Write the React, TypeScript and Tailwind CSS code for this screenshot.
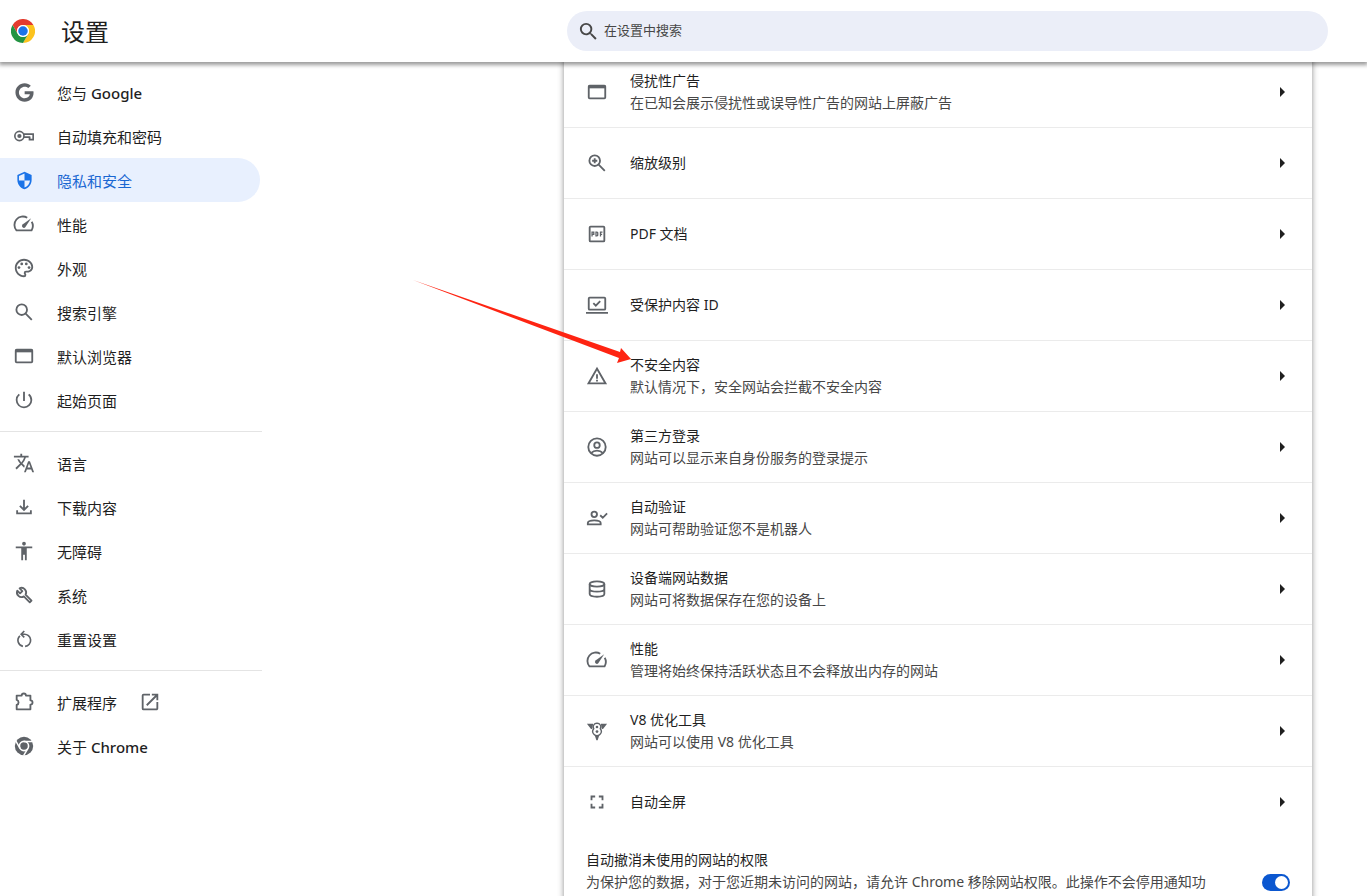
import type { ReactNode } from 'react';
import { FaGoogle } from 'react-icons/fa';
import {
  MdOutlinePalette, MdSearch, MdPowerSettingsNew, MdTranslate, MdAccessibility, MdOutlineFullscreen,
  MdOpenInNew, MdWarningAmber, MdSecurity,
} from 'react-icons/md';

function Glyph({ children, box = '0 0 24 24' }: { children: ReactNode; box?: string }) {
  return (
    <svg viewBox={box} className="size-[22px]" fill="none" stroke="currentColor" strokeWidth="2" aria-hidden="true">
      {children}
    </svg>
  );
}

const Key = () => (
  <Glyph>
    <circle cx="7" cy="12" r="5" strokeWidth="1.800" />
    <circle cx="7" cy="12" r="2.300" fill="currentColor" stroke="none" />
    <path d="M11.500 10H22v6h-4v-2.800h-6.200M18.200 13.200v2.800" strokeWidth="1.800" />
  </Glyph>
);

const Speed = () => (
  <Glyph>
    <path d="M15.500 5.100A9.200 9.200 0 0 0 3.800 19h16.400a9.200 9.200 0 0 0 .2-9.400" />
    <path d="M19.800 5.800 10.400 12.600a2.100 2.100 0 1 0 3 3z" fill="currentColor" stroke="none" />
  </Glyph>
);

const WindowIcon = () => (
  <Glyph>
    <rect x="3" y="5" width="18" height="14" rx="1" />
    <path d="M2.500 6.500h19" strokeWidth="3" />
  </Glyph>
);

const Loupe = () => (
  <Glyph>
    <circle cx="9.500" cy="9.500" r="5.800" />
    <path d="m13.800 13.800 6.700 6.700" />
  </Glyph>
);

const ZoomIn = () => (
  <Glyph>
    <circle cx="9.500" cy="9.500" r="5.800" />
    <path d="m13.800 13.800 6.700 6.700M9.500 6.700v5.600M6.700 9.500h5.600" />
  </Glyph>
);

const Download = () => (
  <Glyph>
    <path d="M12 4v11M7.500 10.800 12 15.200l4.500-4.400M4.500 15.500V19h15v-3.500" />
  </Glyph>
);

const Wrench = () => (
  <Glyph>
    <path d="M11.800 13.500 18.300 20l1.900-1.900-6.500-6.500A5 5 0 0 0 7.200 4.700l3 3-2.500 2.500-3-3a5 5 0 0 0 7.100 6.300z" strokeLinejoin="round" />
  </Glyph>
);

const Reset = () => (
  <Glyph>
    <path d="M10.800 20A6.600 6.600 0 0 1 7.600 8.600M13.200 20A6.600 6.600 0 0 0 12 6.800H9.500M12.300 3.300 8.900 6.800l3.400 3.400" strokeWidth="1.800" />
  </Glyph>
);

const Puzzle = () => (
  <Glyph>
    <path d="M4 5h5.500a2.200 2.200 0 0 1 4.600 0H19v5.200a2.200 2.200 0 0 1 0 4.600V20H4v-4.800a2.800 2.800 0 0 0 0-5.400z" strokeLinejoin="round" />
  </Glyph>
);

const ChromeMono = () => (
  <Glyph>
    <circle cx="12" cy="12" r="10" fill="currentColor" stroke="none" />
    <circle cx="12" cy="12" r="5" fill="currentColor" stroke="#fff" strokeWidth="1.800" />
    <path d="M12 7h9.500M7.700 14.500 3 6.400M16.300 14.500 11.600 22.600" stroke="#fff" strokeWidth="1.600" />
  </Glyph>
);

const Pdf = () => (
  <Glyph>
    <rect x="4" y="4" width="16" height="16" rx="1" />
    <path d="M6.600 14.800V9.900h1.900v2.400H6.600M10.900 9.900v4.200h1.100l.8-.8V10.700l-.8-.8zM15.800 14.800V9.900h2.200M15.800 12.400h1.800" strokeWidth="1.400" />
  </Glyph>
);

const LaptopCheck = () => (
  <Glyph>
    <rect x="3" y="4" width="18" height="13" rx="1" />
    <path d="M0 20.500h24M8 10l2.700 2.700 4.800-4.900" />
  </Glyph>
);

const Person = () => (
  <Glyph>
    <circle cx="12" cy="12" r="9.500" />
    <circle cx="12" cy="10" r="3" />
    <path d="M5.800 18.500c3-3.300 9.400-3.300 12.400 0" />
  </Glyph>
);

const PersonCheck = () => (
  <Glyph>
    <circle cx="9" cy="8" r="3" />
    <path d="M2 19v-1.500c0-4 14-4 14 0V19zM15.500 9l2.800 2.800L23 7" />
  </Glyph>
);

const Database = () => (
  <Glyph>
    <ellipse cx="12" cy="6.500" rx="8" ry="2.900" />
    <path d="M4 6.500v11c0 3.900 16 3.900 16 0v-11M4 12c0 3.900 16 3.900 16 0" />
  </Glyph>
);

const VEight = () => (
  <Glyph>
    <path d="M1 4h6.800L6.800 10 5.200 9.500zM23 4h-6.800l1 6 1.600-.5z" fill="currentColor" stroke="none" />
    <path d="M12 3.500a4 4 0 0 0-3.600 6 4.600 4.600 0 1 0 7.200 0A4 4 0 0 0 12 3.500z" strokeWidth="1.500" />
    <circle cx="12" cy="7.600" r="1.400" fill="currentColor" stroke="none" />
    <circle cx="12" cy="12.600" r="1.500" fill="currentColor" stroke="none" />
    <path d="M9.800 17.500h4.400L12.700 22h-1.400z" fill="currentColor" stroke="none" />
  </Glyph>
);

function ChromeLogo() {
  return (
    <svg viewBox="0 0 48 48" className="size-6" aria-hidden="true">
      <path d="M3.200 12A24 24 0 0 1 44.800 12H24a12 12 0 0 0-10.400 18z" fill="#e33b2e" />
      <path d="M44.800 12A24 24 0 0 1 24 48l10.400-18A12 12 0 0 0 24 12z" fill="#fcc31e" />
      <path d="M3.200 12A24 24 0 0 0 24 48l10.400-18a12 12 0 0 1-20.800 0z" fill="#229342" />
      <circle cx="24" cy="24" r="12" fill="#fff" />
      <circle cx="24" cy="24" r="9.500" fill="#1a73e8" />
    </svg>
  );
}

type NavEntry = { label: string; latin?: string; icon: ReactNode; active?: boolean; external?: boolean };

const groups: NavEntry[][] = [
  [
    { label: '您与', latin: 'Google', icon: <FaGoogle className="size-[19px]" /> },
    { label: '自动填充和密码', icon: <Key /> },
    { label: '隐私和安全', icon: <MdSecurity className="size-[19px]" />, active: true },
    { label: '性能', icon: <Speed /> },
    { label: '外观', icon: <MdOutlinePalette className="size-[22px]" /> },
    { label: '搜索引擎', icon: <Loupe /> },
    { label: '默认浏览器', icon: <WindowIcon /> },
    { label: '起始页面', icon: <MdPowerSettingsNew className="size-[22px]" /> },
  ],
  [
    { label: '语言', icon: <MdTranslate className="size-[22px]" /> },
    { label: '下载内容', icon: <Download /> },
    { label: '无障碍', icon: <MdAccessibility className="size-[22px]" /> },
    { label: '系统', icon: <Wrench /> },
    { label: '重置设置', icon: <Reset /> },
  ],
  [
    { label: '扩展程序', icon: <Puzzle />, external: true },
    { label: '关于', latin: 'Chrome', icon: <ChromeMono /> },
  ],
];

const rows: { title: string; detail?: string; icon: ReactNode }[] = [
  { title: '侵扰性广告', detail: '在已知会展示侵扰性或误导性广告的网站上屏蔽广告', icon: <WindowIcon /> },
  { title: '缩放级别', icon: <ZoomIn /> },
  { title: 'PDF 文档', icon: <Pdf /> },
  { title: '受保护内容 ID', icon: <LaptopCheck /> },
  { title: '不安全内容', detail: '默认情况下，安全网站会拦截不安全内容', icon: <MdWarningAmber className="size-[22px]" /> },
  { title: '第三方登录', detail: '网站可以显示来自身份服务的登录提示', icon: <Person /> },
  { title: '自动验证', detail: '网站可帮助验证您不是机器人', icon: <PersonCheck /> },
  { title: '设备端网站数据', detail: '网站可将数据保存在您的设备上', icon: <Database /> },
  { title: '性能', detail: '管理将始终保持活跃状态且不会释放出内存的网站', icon: <Speed /> },
  { title: 'V8 优化工具', detail: '网站可以使用 V8 优化工具', icon: <VEight /> },
  { title: '自动全屏', icon: <MdOutlineFullscreen className="size-6" /> },
];

function NavLink({ entry }: { entry: NavEntry }) {
  return (
    <a
      href="#"
      className={
        entry.active
          ? 'flex h-11 w-[260px] items-center gap-[22px] rounded-r-full bg-[#e8f0fe] pl-[13px] text-[#1967d2]'
          : 'flex h-11 w-[260px] items-center gap-[22px] pl-[13px] text-[#1f1f1f]'
      }
    >
      <span
        className={
          entry.active
            ? 'flex size-[22px] items-center justify-center text-[#1a73e8]'
            : 'flex size-[22px] items-center justify-center text-[#5f6368]'
        }
      >
        {entry.icon}
      </span>
      <span className="pt-0.5">
        {entry.label}
        {entry.latin && <span className="font-medium"> {entry.latin}</span>}
      </span>
      {entry.external && <MdOpenInNew className="size-[22px] text-[#5f6368]" />}
    </a>
  );
}

export default function App() {
  return (
    <div className="flex h-screen flex-col overflow-hidden bg-white font-['Noto_Sans','Noto_Sans_CJK_SC',sans-serif] text-[#1f1f1f]">
      <header className="z-10 flex h-[62px] shrink-0 items-center bg-white pr-[39px] shadow-[0_2px_4px_1px_rgba(0,0,0,0.4)]">
        <div className="flex w-[567px] shrink-0 items-center gap-[26px] pl-[11px]">
          <ChromeLogo />
          <h1 className="pt-0.5 text-2xl">设置</h1>
        </div>
        <label className="flex h-10 flex-1 items-center gap-1 rounded-full bg-[#ebeef8] pl-[10px] text-[#474747]">
          <MdSearch className="size-[23px]" />
          <input
            type="search"
            aria-label="在设置中搜索"
            placeholder="在设置中搜索"
            className="flex-1 bg-transparent text-[13px] outline-none placeholder:text-[#474747]"
          />
        </label>
      </header>

      <div className="flex min-h-0 flex-1">
        <nav className="w-[262px] shrink-0 pt-2 text-[15px]">
          {groups.map((group, i) => (
            <div key={i} className={i > 0 ? 'mt-[9px] border-t border-[#e4e4e4] pt-[9px]' : ''}>
              {group.map((entry) => (
                <NavLink key={entry.label} entry={entry} />
              ))}
            </div>
          ))}
        </nav>

        <main className="min-w-0 flex-1 overflow-hidden pr-[55px] pl-[302px]">
          <section className="relative -mt-[6px] min-h-full bg-white text-sm/[22px] shadow-[0_1px_6px_rgba(0,0,0,0.45)]">
            {rows.map((row, i) => (
              <button
                key={row.title}
                type="button"
                className={
                  i > 0
                    ? 'flex min-h-[71px] w-full items-center border-t border-[#ebebeb] pr-[27px] pl-[22px] text-left'
                    : 'flex min-h-[71px] w-full items-center pr-[27px] pl-[22px] text-left'
                }
              >
                <span className="flex size-[22px] items-center justify-center text-[#5f6368]">{row.icon}</span>
                <span className="ml-[22px] flex-1">
                  <span className="block">{row.title}</span>
                  {row.detail && <span className="block text-[#474747]">{row.detail}</span>}
                </span>
                <svg viewBox="0 0 5 10" className="h-[10px] w-[5px]" aria-hidden="true">
                  <path d="M0 0l5 5-5 5z" fill="#1f1f1f" />
                </svg>
              </button>
            ))}
            <div className="flex items-center px-[22px] pt-3">
              <div className="min-h-[66px] flex-1">
                <p>自动撤消未使用的网站的权限</p>
                <p className="whitespace-nowrap text-[#474747]">
                  为保护您的数据，对于您近期未访问的网站，请允许 Chrome 移除网站权限。此操作不会停用通知功
                </p>
              </div>
              <input
                type="checkbox"
                role="switch"
                defaultChecked
                aria-label="自动撤消未使用的网站的权限"
                className="flex h-[17px] w-7 appearance-none items-center justify-end rounded-full bg-[#0b57d0] pr-0.5 before:size-[13px] before:rounded-full before:bg-white"
              />
            </div>
            <svg
              viewBox="0 0 218 84"
              className="pointer-events-none absolute top-[223px] -left-[151px] h-[84px] w-[218px]"
              aria-hidden="true"
            >
              <path d="M0 1 L207 73 L208 69 L218 80 L204 84 L206 79 Z" fill="#fe2412" />
            </svg>
          </section>
        </main>
      </div>
    </div>
  );
}
